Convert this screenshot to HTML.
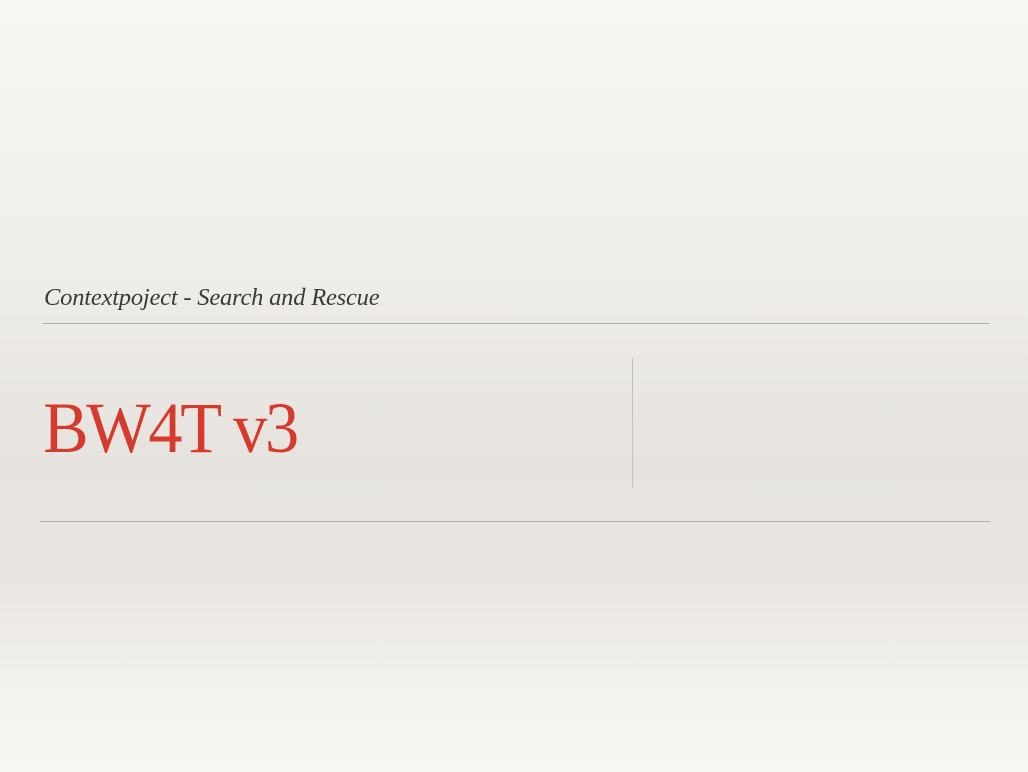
<!DOCTYPE html>
<html><head><meta charset="utf-8"><style>
html,body{margin:0;padding:0}
body{width:1028px;height:772px;overflow:hidden;position:relative;
background:linear-gradient(to bottom,#f8f6f2 0%,#f1efea 30%,#e6e3de 60%,#e9e6e1 75%,#f4f2ee 90%,#f8f6f3 100%);
font-family:"Liberation Serif",serif}
.sub{position:absolute;left:44px;top:284px;font-style:italic;font-size:24.5px;color:#3a3a3a;white-space:nowrap;letter-spacing:-0.2px}
.title{position:absolute;left:43px;top:385px;font-size:72px;color:#d63a2c;white-space:nowrap;letter-spacing:-2.5px;line-height:86px;transform:scaleX(0.95);transform-origin:left top}
.h{position:absolute;height:1px;background:#b4b1ac}
.v{position:absolute;width:1px;background:#c4c1bc;left:632px;top:358px;height:130px}
</style></head><body>
<div class="sub">Contextpoject - Search and Rescue</div>
<div class="h" style="left:42px;top:323px;width:948px"></div>
<div class="title">BW4T v3</div>
<div class="v"></div>
<div class="h" style="left:40px;top:521px;width:950px"></div>
</body></html>
